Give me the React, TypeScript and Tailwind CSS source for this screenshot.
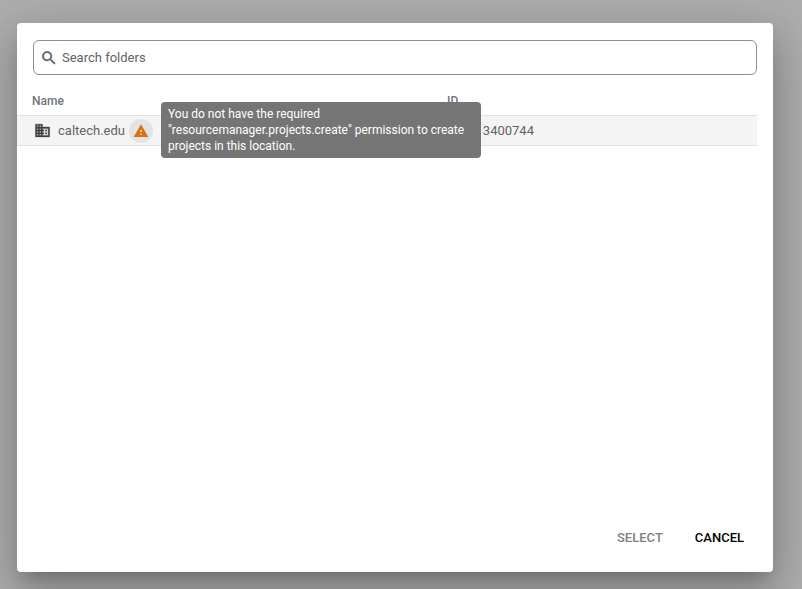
const font = "font-['Roboto',sans-serif]";

function SearchIcon() {
  return (
    <svg viewBox="0 0 24 24" className="w-[18px] h-[18px] fill-[#5f6368] stroke-[#5f6368] stroke-[0.5]">
      <path d="M15.5 14h-.79l-.28-.27C15.41 12.59 16 11.11 16 9.5 16 5.91 13.09 3 9.5 3S3 5.91 3 9.5 5.91 16 9.5 16c1.61 0 3.09-.59 4.23-1.57l.27.28v.79l5 4.99L20.49 19l-4.99-5zm-6 0C7.01 14 5 11.99 5 9.5S7.01 5 9.5 5 14 7.01 14 9.5 11.99 14 9.5 14z" />
    </svg>
  );
}

function DomainIcon() {
  return (
    <svg viewBox="0 0 24 24" className="-mt-px w-[17px] h-[17px] fill-[#3c4043] stroke-[#3c4043] stroke-[0.5]">
      <path d="M12 7V3H2v18h20V7H12zM6 19H4v-2h2v2zm0-4H4v-2h2v2zm0-4H4V9h2v2zm0-4H4V5h2v2zm4 12H8v-2h2v2zm0-4H8v-2h2v2zm0-4H8V9h2v2zm0-4H8V5h2v2zm10 12h-8v-2h2v-2h-2v-2h2v-2h-2V9h8v10zm-2-8h-2v2h2v-2zm0 4h-2v2h2v-2z" />
    </svg>
  );
}

function WarningIcon() {
  return (
    <svg viewBox="0 0 24 24" className="w-4 h-4 fill-[#dd7015]">
      <path d="M1 21h22L12 2 1 21zm12-3h-2v-2h2v2zm0-4h-2v-4h2v4z" />
    </svg>
  );
}

export default function App() {
  return (
    <div className={`h-[589px] w-[802px] overflow-hidden bg-[#adadad] pl-[17px] pt-[23px] ${font}`}>
      <div className="relative flex h-[549px] w-[756px] flex-col rounded-[4px] bg-white shadow-[0_11px_15px_-7px_rgba(0,0,0,0.2),0_24px_38px_3px_rgba(0,0,0,0.14),0_9px_46px_8px_rgba(0,0,0,0.12)]">
        {/* Search field */}
        <div className="ml-4 mt-[17px] flex h-[35px] w-[724px] items-center gap-1 rounded-[6px] border border-[#8b8f93] pl-1.5">
          <SearchIcon />
          <span className="text-[13px] text-[#5f6368]">Search folders</span>
        </div>

        {/* Table */}
        <div className="ml-4 mb-[3px] mt-[15px] flex h-[22px] w-[724px] items-center text-xs font-medium text-[#70757a]">
          <span className="-ml-px w-[415px]">Name</span>
          <span>ID</span>
        </div>
        <div className="flex h-[31px] w-[740px] items-center border-y border-[#e0e0e0] bg-[#f4f4f4] text-[13px] text-[#5f6368]">
          <div className="ml-[17px] flex items-center">
            <DomainIcon />
            <span className="ml-[7px]">caltech.edu</span>
            <span className="ml-1 flex h-6 w-6 items-center justify-center rounded-full bg-[#e3e3e3]">
              <WarningIcon />
            </span>
          </div>
          <span className="ml-auto mr-[223px]">3400744</span>
        </div>

        {/* Footer actions */}
        <div className="mb-[25px] mr-[29px] mt-auto flex items-center justify-end gap-[32px] text-[13px] font-medium">
          <span className="text-[#808080]">SELECT</span>
          <span className="text-black">CANCEL</span>
        </div>

        {/* Tooltip */}
        <div className="absolute left-[144px] top-[79px] h-[56px] w-[320px] rounded-[4px] bg-[#757575] px-[7px] py-1 text-xs leading-4 text-white">
          You do not have the required
          <br />
          "resourcemanager.projects.create" permission to create
          <br />
          projects in this location.
        </div>
      </div>
    </div>
  );
}
